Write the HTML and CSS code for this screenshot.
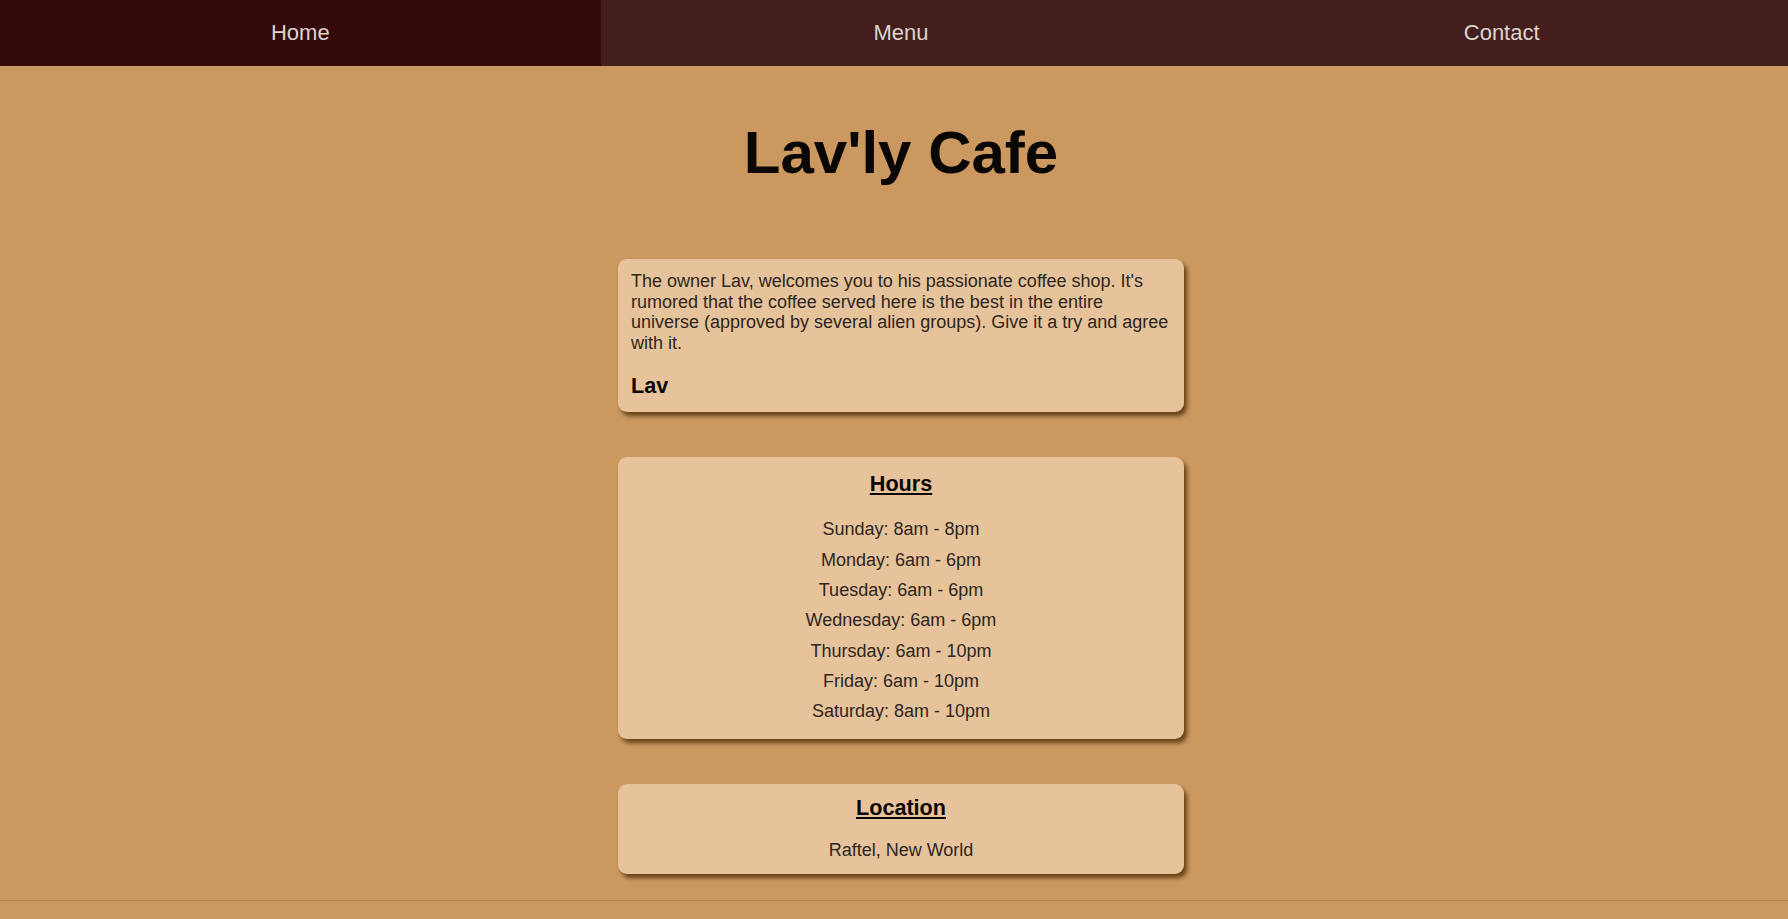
FILE: index.html
```html
<!DOCTYPE html>
<html lang="en">
<head>
<meta charset="utf-8">
<title>Lav'ly Cafe</title>
<link rel="stylesheet" href="styles.css">
</head>
<body>
<div class="page">
  <nav class="nav">
    <a class="nav-link active" href="#">Home</a>
    <a class="nav-link" href="#">Menu</a>
    <a class="nav-link" href="#">Contact</a>
  </nav>
  <main class="main">
    <h1 class="title">Lav'ly Cafe</h1>
    <div class="cards">
      <section class="card card-intro">
        <p class="intro-text">The owner Lav, welcomes you to his passionate coffee shop. It's rumored that the coffee served here is the best in the entire universe (approved by several alien groups). Give it a try and agree with it.</p>
        <h3 class="signature">Lav</h3>
      </section>
      <section class="card card-center">
        <h3 class="card-heading hours-heading">Hours</h3>
        <ul class="hours">
          <li>Sunday: 8am - 8pm</li>
          <li>Monday: 6am - 6pm</li>
          <li>Tuesday: 6am - 6pm</li>
          <li>Wednesday: 6am - 6pm</li>
          <li>Thursday: 6am - 10pm</li>
          <li>Friday: 6am - 10pm</li>
          <li>Saturday: 8am - 10pm</li>
        </ul>
      </section>
      <section class="card card-center">
        <h3 class="card-heading loc-heading">Location</h3>
        <p class="location">Raftel, New World</p>
      </section>
    </div>
  </main>
  <footer class="footer"></footer>
</div>
</body>
</html>
```

FILE: styles.css
```css
html, body {
  margin: 0;
  padding: 0;
  overflow: hidden;
}

body {
  background: #cb9860;
  font-family: "Liberation Sans", Arial, sans-serif;
  color: #2e2620;
  font-size: 18px;
}

.page {
  width: calc(100% + 14px);
}

.nav {
  display: flex;
  height: 66px;
  background: #441e1c;
}

.nav-link {
  flex: 1;
  display: flex;
  align-items: center;
  justify-content: center;
  color: #dcd3cf;
  text-decoration: none;
  font-size: 22px;
  padding-bottom: 1px;
}

.nav-link.active {
  background: #330a09;
}

.main {
  display: flex;
  flex-direction: column;
  align-items: center;
}

.title {
  margin: 52px 0 72px;
  font-size: 60px;
  line-height: 1.15;
  font-weight: 700;
  color: #0a0604;
}

.cards {
  display: flex;
  flex-direction: column;
  gap: 45px;
  width: 566px;
}

.card {
  background: #e6c39b;
  border-radius: 9px;
  box-shadow: 3px 4px 4px rgba(84, 50, 10, 0.85);
  padding: 12px 13px 13px;
}

.card-center {
  text-align: center;
}

.intro-text {
  margin: 0;
  line-height: 1.15;
}

.signature {
  margin: 20px 0 0;
  font-size: 21.6px;
  line-height: 1.15;
  color: #0a0604;
}

.card-heading {
  margin: 0;
  font-size: 21.6px;
  line-height: 1.15;
  color: #0a0604;
  text-decoration: underline;
  text-underline-offset: 2px;
}

.hours-heading {
  margin-top: 3px;
}

.hours {
  list-style: none;
  margin: 18px 0 0;
  padding: 0;
  line-height: 30.3px;
}

.location {
  margin: 19px 0 0;
  line-height: 1.15;
}

.footer {
  margin-top: 26px;
  border-top: 1px solid #b88552;
  height: 30px;
}
```
